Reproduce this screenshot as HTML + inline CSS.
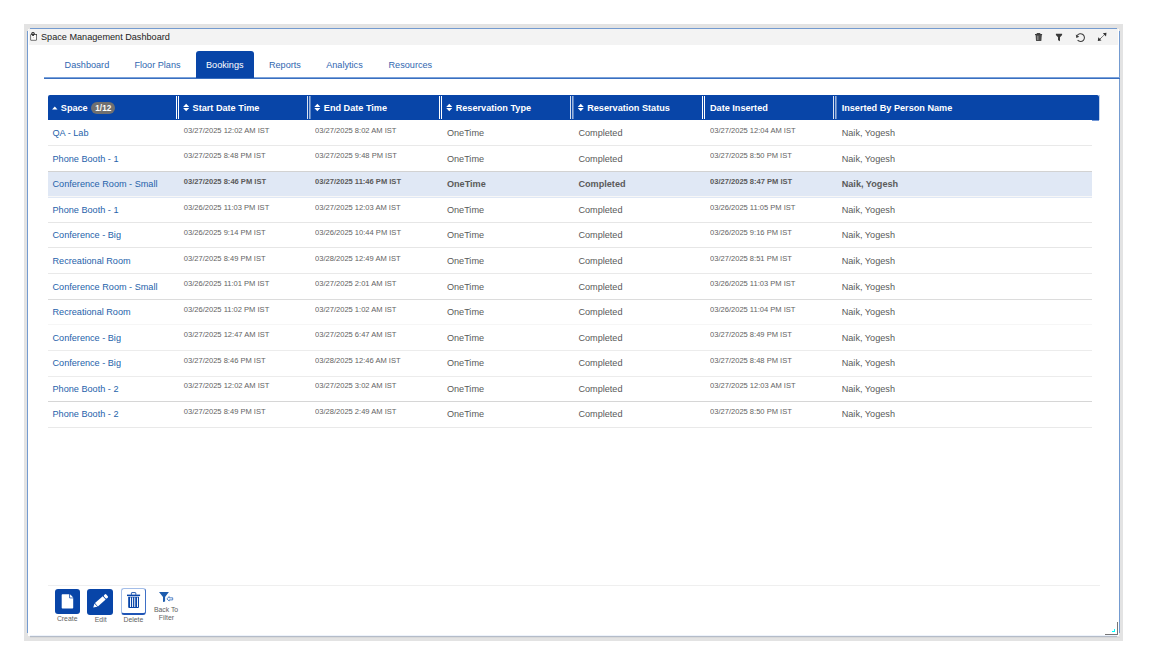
<!DOCTYPE html>
<html><head><meta charset="utf-8"><title>Space Management Dashboard</title>
<style>
html,body{margin:0;padding:0;background:#fff;width:1156px;height:666px;overflow:hidden;}
body{position:relative;font-family:"Liberation Sans",sans-serif;}
.b{position:absolute;}
.t{position:absolute;white-space:nowrap;transform-origin:0 50%;}
.bold{font-weight:bold;}
.link{color:#2562aa;}
.gray{color:#5a5a5a;}
.dgray{color:#636363;}
</style></head><body>
<div class="b" style="left:24.00px;top:24.00px;width:1099.00px;height:617.00px;background:#e3e3e3"></div>
<div class="b" style="left:28.00px;top:29.00px;width:1091.00px;height:607.00px;background:#fff"></div>
<div class="b" style="left:27.60px;top:28.60px;width:2.00px;height:2.00px;background:#f4f0ee;border-radius:2px 0 0 0"></div>
<div class="b" style="left:30.00px;top:28.00px;width:1087.00px;height:1.00px;background:#749bd0"></div>
<div class="b" style="left:27.00px;top:31.00px;width:1.00px;height:602.00px;background:#749bd0"></div>
<div class="b" style="left:1119.00px;top:31.00px;width:1.00px;height:602.00px;background:#749bd0"></div>
<div class="b" style="left:30.00px;top:635.00px;width:1087.00px;height:1.00px;background:#eef3fb"></div>
<div class="b" style="left:30.00px;top:636.00px;width:1087.00px;height:1.00px;background:#b4bcc9"></div>
<div class="b" style="left:30.00px;top:637.00px;width:1090.00px;height:1.00px;background:#d9d9d9"></div>
<div class="b" style="left:29.00px;top:29.00px;width:1089.00px;height:15.50px;background:#f3f3f3"></div>
<div class="t " style="left:41.00px;top:32.96px;font-size:9.14px;line-height:9.14px;transform:scaleY(1.06);color:#222">Space Management Dashboard</div>
<div class="b" style="left:44.00px;top:77.00px;width:1076.00px;height:1.00px;background:#7aa2da"></div>
<div class="b" style="left:44.00px;top:78.00px;width:1076.00px;height:1.00px;background:#3a6fc0"></div>
<div class="b" style="left:196.40px;top:51.40px;width:57.60px;height:26.60px;background:#0845a8;border-radius:3px 3px 0 0"></div>
<div class="t " style="left:64.60px;top:60.76px;font-size:9.14px;line-height:9.14px;transform:scaleY(1.06);color:#3067b0">Dashboard</div>
<div class="t " style="left:134.40px;top:60.76px;font-size:9.14px;line-height:9.14px;transform:scaleY(1.06);color:#3067b0">Floor Plans</div>
<div class="t " style="left:206.00px;top:60.76px;font-size:9.14px;line-height:9.14px;transform:scaleY(1.06);color:#fff">Bookings</div>
<div class="t " style="left:268.90px;top:60.76px;font-size:9.14px;line-height:9.14px;transform:scaleY(1.06);color:#3067b0">Reports</div>
<div class="t " style="left:326.20px;top:60.76px;font-size:9.14px;line-height:9.14px;transform:scaleY(1.06);color:#3067b0">Analytics</div>
<div class="t " style="left:388.50px;top:60.76px;font-size:9.14px;line-height:9.14px;transform:scaleY(1.06);color:#3067b0">Resources</div>
<div class="b" style="left:47.60px;top:95.00px;width:1051.40px;height:25.00px;background:#0845a8;border-radius:2px 2px 0 0"></div>
<div class="b" style="left:1092.00px;top:120.00px;width:7.00px;height:1.00px;background:#7297d6"></div>
<div class="b" style="left:1099.00px;top:95.00px;width:1.00px;height:25.00px;background:rgba(8,69,168,0.25)"></div>
<div class="b" style="left:176.00px;top:96.00px;width:1.00px;height:23.00px;background:#fff"></div>
<div class="b" style="left:178.00px;top:96.00px;width:1.00px;height:23.00px;background:#fff"></div>
<div class="b" style="left:307.00px;top:96.00px;width:1.00px;height:23.00px;background:rgba(255,255,255,0.85)"></div>
<div class="b" style="left:309.00px;top:96.00px;width:1.00px;height:23.00px;background:rgba(255,255,255,0.6)"></div>
<div class="b" style="left:310.00px;top:96.00px;width:1.00px;height:23.00px;background:rgba(255,255,255,0.35)"></div>
<div class="b" style="left:439.00px;top:96.00px;width:1.00px;height:23.00px;background:#fff"></div>
<div class="b" style="left:441.00px;top:96.00px;width:1.00px;height:23.00px;background:#fff"></div>
<div class="b" style="left:570.00px;top:96.00px;width:1.00px;height:23.00px;background:rgba(255,255,255,0.85)"></div>
<div class="b" style="left:572.00px;top:96.00px;width:1.00px;height:23.00px;background:rgba(255,255,255,0.6)"></div>
<div class="b" style="left:573.00px;top:96.00px;width:1.00px;height:23.00px;background:rgba(255,255,255,0.35)"></div>
<div class="b" style="left:702.00px;top:96.00px;width:1.00px;height:23.00px;background:#fff"></div>
<div class="b" style="left:704.00px;top:96.00px;width:1.00px;height:23.00px;background:#fff"></div>
<div class="b" style="left:833.00px;top:96.00px;width:1.00px;height:23.00px;background:rgba(255,255,255,0.85)"></div>
<div class="b" style="left:835.00px;top:96.00px;width:1.00px;height:23.00px;background:rgba(255,255,255,0.6)"></div>
<div class="b" style="left:836.00px;top:96.00px;width:1.00px;height:23.00px;background:rgba(255,255,255,0.35)"></div>
<div class="t bold" style="left:60.80px;top:103.96px;font-size:9.14px;line-height:9.14px;transform:scaleY(1.06);color:#fff">Space</div>
<div class="t bold" style="left:192.60px;top:103.96px;font-size:9.14px;line-height:9.14px;transform:scaleY(1.06);color:#fff">Start Date Time</div>
<div class="t bold" style="left:323.80px;top:103.96px;font-size:9.14px;line-height:9.14px;transform:scaleY(1.06);color:#fff">End Date Time</div>
<div class="t bold" style="left:455.70px;top:103.96px;font-size:9.14px;line-height:9.14px;transform:scaleY(1.06);color:#fff">Reservation Type</div>
<div class="t bold" style="left:587.20px;top:103.96px;font-size:9.14px;line-height:9.14px;transform:scaleY(1.06);color:#fff">Reservation Status</div>
<div class="t bold" style="left:710.00px;top:103.96px;font-size:9.14px;line-height:9.14px;transform:scaleY(1.06);color:#fff">Date Inserted</div>
<div class="t bold" style="left:841.70px;top:103.96px;font-size:9.14px;line-height:9.14px;transform:scaleY(1.06);color:#fff">Inserted By Person Name</div>
<div class="b" style="left:47.80px;top:145.00px;width:1044.00px;height:1.00px;background:#e9e9e9"></div>
<div class="t link" style="left:52.50px;top:129.46px;font-size:9.14px;line-height:9.14px;transform:scaleY(1.06);">QA - Lab</div>
<div class="t dgray" style="left:183.80px;top:127.10px;font-size:7.56px;line-height:7.56px;transform:scaleY(1.07);">03/27/2025 12:02 AM IST</div>
<div class="t dgray" style="left:315.00px;top:127.10px;font-size:7.56px;line-height:7.56px;transform:scaleY(1.07);">03/27/2025 8:02 AM IST</div>
<div class="t gray" style="left:446.90px;top:129.46px;font-size:9.14px;line-height:9.14px;transform:scaleY(1.06);">OneTime</div>
<div class="t gray" style="left:578.40px;top:129.46px;font-size:9.14px;line-height:9.14px;transform:scaleY(1.06);">Completed</div>
<div class="t dgray" style="left:710.00px;top:127.10px;font-size:7.56px;line-height:7.56px;transform:scaleY(1.07);">03/27/2025 12:04 AM IST</div>
<div class="t gray" style="left:841.70px;top:129.46px;font-size:9.14px;line-height:9.14px;transform:scaleY(1.06);">Naik, Yogesh</div>
<div class="t link" style="left:52.50px;top:154.78px;font-size:9.14px;line-height:9.14px;transform:scaleY(1.06);">Phone Booth - 1</div>
<div class="t dgray" style="left:183.80px;top:152.42px;font-size:7.56px;line-height:7.56px;transform:scaleY(1.07);">03/27/2025 8:48 PM IST</div>
<div class="t dgray" style="left:315.00px;top:152.42px;font-size:7.56px;line-height:7.56px;transform:scaleY(1.07);">03/27/2025 9:48 PM IST</div>
<div class="t gray" style="left:446.90px;top:154.78px;font-size:9.14px;line-height:9.14px;transform:scaleY(1.06);">OneTime</div>
<div class="t gray" style="left:578.40px;top:154.78px;font-size:9.14px;line-height:9.14px;transform:scaleY(1.06);">Completed</div>
<div class="t dgray" style="left:710.00px;top:152.42px;font-size:7.56px;line-height:7.56px;transform:scaleY(1.07);">03/27/2025 8:50 PM IST</div>
<div class="t gray" style="left:841.70px;top:154.78px;font-size:9.14px;line-height:9.14px;transform:scaleY(1.06);">Naik, Yogesh</div>
<div class="b" style="left:47.80px;top:172.00px;width:1044.00px;height:26.00px;background:#e0e8f5"></div>
<div class="b" style="left:47.80px;top:171.00px;width:1044.00px;height:1.00px;background:#d2d2d2"></div>
<div class="b" style="left:47.80px;top:196.00px;width:1044.00px;height:1.00px;background:#f7f7f7"></div>
<div class="t link" style="left:52.50px;top:180.33px;font-size:9.14px;line-height:9.14px;transform:scaleY(1.06);">Conference Room - Small</div>
<div class="t gray bold" style="left:183.80px;top:177.97px;font-size:7.56px;line-height:7.56px;transform:scaleY(1.07);">03/27/2025 8:46 PM IST</div>
<div class="t gray bold" style="left:315.00px;top:177.97px;font-size:7.56px;line-height:7.56px;transform:scaleY(1.07);">03/27/2025 11:46 PM IST</div>
<div class="t gray bold" style="left:446.90px;top:180.33px;font-size:9.14px;line-height:9.14px;transform:scaleY(1.06);">OneTime</div>
<div class="t gray bold" style="left:578.40px;top:180.33px;font-size:9.14px;line-height:9.14px;transform:scaleY(1.06);">Completed</div>
<div class="t gray bold" style="left:710.00px;top:177.97px;font-size:7.56px;line-height:7.56px;transform:scaleY(1.07);">03/27/2025 8:47 PM IST</div>
<div class="t gray bold" style="left:841.70px;top:180.33px;font-size:9.14px;line-height:9.14px;transform:scaleY(1.06);">Naik, Yogesh</div>
<div class="b" style="left:47.80px;top:222.00px;width:1044.00px;height:1.00px;background:#e6e6e6"></div>
<div class="t link" style="left:52.50px;top:205.88px;font-size:9.14px;line-height:9.14px;transform:scaleY(1.06);">Phone Booth - 1</div>
<div class="t dgray" style="left:183.80px;top:203.52px;font-size:7.56px;line-height:7.56px;transform:scaleY(1.07);">03/26/2025 11:03 PM IST</div>
<div class="t dgray" style="left:315.00px;top:203.52px;font-size:7.56px;line-height:7.56px;transform:scaleY(1.07);">03/27/2025 12:03 AM IST</div>
<div class="t gray" style="left:446.90px;top:205.88px;font-size:9.14px;line-height:9.14px;transform:scaleY(1.06);">OneTime</div>
<div class="t gray" style="left:578.40px;top:205.88px;font-size:9.14px;line-height:9.14px;transform:scaleY(1.06);">Completed</div>
<div class="t dgray" style="left:710.00px;top:203.52px;font-size:7.56px;line-height:7.56px;transform:scaleY(1.07);">03/26/2025 11:05 PM IST</div>
<div class="t gray" style="left:841.70px;top:205.88px;font-size:9.14px;line-height:9.14px;transform:scaleY(1.06);">Naik, Yogesh</div>
<div class="b" style="left:47.80px;top:247.00px;width:1044.00px;height:1.00px;background:#e6e6e6"></div>
<div class="t link" style="left:52.50px;top:231.43px;font-size:9.14px;line-height:9.14px;transform:scaleY(1.06);">Conference - Big</div>
<div class="t dgray" style="left:183.80px;top:229.07px;font-size:7.56px;line-height:7.56px;transform:scaleY(1.07);">03/26/2025 9:14 PM IST</div>
<div class="t dgray" style="left:315.00px;top:229.07px;font-size:7.56px;line-height:7.56px;transform:scaleY(1.07);">03/26/2025 10:44 PM IST</div>
<div class="t gray" style="left:446.90px;top:231.43px;font-size:9.14px;line-height:9.14px;transform:scaleY(1.06);">OneTime</div>
<div class="t gray" style="left:578.40px;top:231.43px;font-size:9.14px;line-height:9.14px;transform:scaleY(1.06);">Completed</div>
<div class="t dgray" style="left:710.00px;top:229.07px;font-size:7.56px;line-height:7.56px;transform:scaleY(1.07);">03/26/2025 9:16 PM IST</div>
<div class="t gray" style="left:841.70px;top:231.43px;font-size:9.14px;line-height:9.14px;transform:scaleY(1.06);">Naik, Yogesh</div>
<div class="b" style="left:47.80px;top:273.00px;width:1044.00px;height:1.00px;background:#e9e9e9"></div>
<div class="t link" style="left:52.50px;top:256.98px;font-size:9.14px;line-height:9.14px;transform:scaleY(1.06);">Recreational Room</div>
<div class="t dgray" style="left:183.80px;top:254.62px;font-size:7.56px;line-height:7.56px;transform:scaleY(1.07);">03/27/2025 8:49 PM IST</div>
<div class="t dgray" style="left:315.00px;top:254.62px;font-size:7.56px;line-height:7.56px;transform:scaleY(1.07);">03/28/2025 12:49 AM IST</div>
<div class="t gray" style="left:446.90px;top:256.98px;font-size:9.14px;line-height:9.14px;transform:scaleY(1.06);">OneTime</div>
<div class="t gray" style="left:578.40px;top:256.98px;font-size:9.14px;line-height:9.14px;transform:scaleY(1.06);">Completed</div>
<div class="t dgray" style="left:710.00px;top:254.62px;font-size:7.56px;line-height:7.56px;transform:scaleY(1.07);">03/27/2025 8:51 PM IST</div>
<div class="t gray" style="left:841.70px;top:256.98px;font-size:9.14px;line-height:9.14px;transform:scaleY(1.06);">Naik, Yogesh</div>
<div class="b" style="left:47.80px;top:299.00px;width:1044.00px;height:1.00px;background:#dcdcdc"></div>
<div class="t link" style="left:52.50px;top:282.53px;font-size:9.14px;line-height:9.14px;transform:scaleY(1.06);">Conference Room - Small</div>
<div class="t dgray" style="left:183.80px;top:280.17px;font-size:7.56px;line-height:7.56px;transform:scaleY(1.07);">03/26/2025 11:01 PM IST</div>
<div class="t dgray" style="left:315.00px;top:280.17px;font-size:7.56px;line-height:7.56px;transform:scaleY(1.07);">03/27/2025 2:01 AM IST</div>
<div class="t gray" style="left:446.90px;top:282.53px;font-size:9.14px;line-height:9.14px;transform:scaleY(1.06);">OneTime</div>
<div class="t gray" style="left:578.40px;top:282.53px;font-size:9.14px;line-height:9.14px;transform:scaleY(1.06);">Completed</div>
<div class="t dgray" style="left:710.00px;top:280.17px;font-size:7.56px;line-height:7.56px;transform:scaleY(1.07);">03/26/2025 11:03 PM IST</div>
<div class="t gray" style="left:841.70px;top:282.53px;font-size:9.14px;line-height:9.14px;transform:scaleY(1.06);">Naik, Yogesh</div>
<div class="b" style="left:47.80px;top:324.00px;width:1044.00px;height:1.00px;background:#f6f6f6"></div>
<div class="t link" style="left:52.50px;top:308.08px;font-size:9.14px;line-height:9.14px;transform:scaleY(1.06);">Recreational Room</div>
<div class="t dgray" style="left:183.80px;top:305.72px;font-size:7.56px;line-height:7.56px;transform:scaleY(1.07);">03/26/2025 11:02 PM IST</div>
<div class="t dgray" style="left:315.00px;top:305.72px;font-size:7.56px;line-height:7.56px;transform:scaleY(1.07);">03/27/2025 1:02 AM IST</div>
<div class="t gray" style="left:446.90px;top:308.08px;font-size:9.14px;line-height:9.14px;transform:scaleY(1.06);">OneTime</div>
<div class="t gray" style="left:578.40px;top:308.08px;font-size:9.14px;line-height:9.14px;transform:scaleY(1.06);">Completed</div>
<div class="t dgray" style="left:710.00px;top:305.72px;font-size:7.56px;line-height:7.56px;transform:scaleY(1.07);">03/26/2025 11:04 PM IST</div>
<div class="t gray" style="left:841.70px;top:308.08px;font-size:9.14px;line-height:9.14px;transform:scaleY(1.06);">Naik, Yogesh</div>
<div class="b" style="left:47.80px;top:350.00px;width:1044.00px;height:1.00px;background:#ececec"></div>
<div class="t link" style="left:52.50px;top:333.63px;font-size:9.14px;line-height:9.14px;transform:scaleY(1.06);">Conference - Big</div>
<div class="t dgray" style="left:183.80px;top:331.27px;font-size:7.56px;line-height:7.56px;transform:scaleY(1.07);">03/27/2025 12:47 AM IST</div>
<div class="t dgray" style="left:315.00px;top:331.27px;font-size:7.56px;line-height:7.56px;transform:scaleY(1.07);">03/27/2025 6:47 AM IST</div>
<div class="t gray" style="left:446.90px;top:333.63px;font-size:9.14px;line-height:9.14px;transform:scaleY(1.06);">OneTime</div>
<div class="t gray" style="left:578.40px;top:333.63px;font-size:9.14px;line-height:9.14px;transform:scaleY(1.06);">Completed</div>
<div class="t dgray" style="left:710.00px;top:331.27px;font-size:7.56px;line-height:7.56px;transform:scaleY(1.07);">03/27/2025 8:49 PM IST</div>
<div class="t gray" style="left:841.70px;top:333.63px;font-size:9.14px;line-height:9.14px;transform:scaleY(1.06);">Naik, Yogesh</div>
<div class="b" style="left:47.80px;top:376.00px;width:1044.00px;height:1.00px;background:#ececec"></div>
<div class="t link" style="left:52.50px;top:359.18px;font-size:9.14px;line-height:9.14px;transform:scaleY(1.06);">Conference - Big</div>
<div class="t dgray" style="left:183.80px;top:356.82px;font-size:7.56px;line-height:7.56px;transform:scaleY(1.07);">03/27/2025 8:46 PM IST</div>
<div class="t dgray" style="left:315.00px;top:356.82px;font-size:7.56px;line-height:7.56px;transform:scaleY(1.07);">03/28/2025 12:46 AM IST</div>
<div class="t gray" style="left:446.90px;top:359.18px;font-size:9.14px;line-height:9.14px;transform:scaleY(1.06);">OneTime</div>
<div class="t gray" style="left:578.40px;top:359.18px;font-size:9.14px;line-height:9.14px;transform:scaleY(1.06);">Completed</div>
<div class="t dgray" style="left:710.00px;top:356.82px;font-size:7.56px;line-height:7.56px;transform:scaleY(1.07);">03/27/2025 8:48 PM IST</div>
<div class="t gray" style="left:841.70px;top:359.18px;font-size:9.14px;line-height:9.14px;transform:scaleY(1.06);">Naik, Yogesh</div>
<div class="b" style="left:47.80px;top:401.00px;width:1044.00px;height:1.00px;background:#d6d6d6"></div>
<div class="t link" style="left:52.50px;top:384.73px;font-size:9.14px;line-height:9.14px;transform:scaleY(1.06);">Phone Booth - 2</div>
<div class="t dgray" style="left:183.80px;top:382.37px;font-size:7.56px;line-height:7.56px;transform:scaleY(1.07);">03/27/2025 12:02 AM IST</div>
<div class="t dgray" style="left:315.00px;top:382.37px;font-size:7.56px;line-height:7.56px;transform:scaleY(1.07);">03/27/2025 3:02 AM IST</div>
<div class="t gray" style="left:446.90px;top:384.73px;font-size:9.14px;line-height:9.14px;transform:scaleY(1.06);">OneTime</div>
<div class="t gray" style="left:578.40px;top:384.73px;font-size:9.14px;line-height:9.14px;transform:scaleY(1.06);">Completed</div>
<div class="t dgray" style="left:710.00px;top:382.37px;font-size:7.56px;line-height:7.56px;transform:scaleY(1.07);">03/27/2025 12:03 AM IST</div>
<div class="t gray" style="left:841.70px;top:384.73px;font-size:9.14px;line-height:9.14px;transform:scaleY(1.06);">Naik, Yogesh</div>
<div class="b" style="left:47.80px;top:427.00px;width:1044.00px;height:1.00px;background:#e9e9e9"></div>
<div class="t link" style="left:52.50px;top:410.28px;font-size:9.14px;line-height:9.14px;transform:scaleY(1.06);">Phone Booth - 2</div>
<div class="t dgray" style="left:183.80px;top:407.92px;font-size:7.56px;line-height:7.56px;transform:scaleY(1.07);">03/27/2025 8:49 PM IST</div>
<div class="t dgray" style="left:315.00px;top:407.92px;font-size:7.56px;line-height:7.56px;transform:scaleY(1.07);">03/28/2025 2:49 AM IST</div>
<div class="t gray" style="left:446.90px;top:410.28px;font-size:9.14px;line-height:9.14px;transform:scaleY(1.06);">OneTime</div>
<div class="t gray" style="left:578.40px;top:410.28px;font-size:9.14px;line-height:9.14px;transform:scaleY(1.06);">Completed</div>
<div class="t dgray" style="left:710.00px;top:407.92px;font-size:7.56px;line-height:7.56px;transform:scaleY(1.07);">03/27/2025 8:50 PM IST</div>
<div class="t gray" style="left:841.70px;top:410.28px;font-size:9.14px;line-height:9.14px;transform:scaleY(1.06);">Naik, Yogesh</div>
<div class="b" style="left:91.20px;top:102.30px;width:24.20px;height:11.70px;background:#707070;border-radius:6px"></div>
<div class="t bold" style="left:95.30px;top:104.96px;font-size:8.2px;line-height:8.2px;transform:scaleY(1.06);color:#fff">1/12</div>
<div class="b" style="left:47.50px;top:585.00px;width:1052.00px;height:1.00px;background:#efefef"></div>
<div class="b" style="left:54.60px;top:588.90px;width:25.20px;height:25.00px;background:#0845a8;border-radius:3px"></div>
<div class="b" style="left:87.30px;top:588.90px;width:25.50px;height:25.80px;background:#0845a8;border-radius:3px"></div>
<div class="b" style="left:120.50px;top:588.20px;width:25.40px;height:26.60px;background:#fff;border:1px solid #a3bde8;border-right-color:#3f70c6;border-bottom:2px solid #1f55b6;border-radius:3px;box-sizing:border-box"></div>
<div class="t " style="left:56.90px;top:615.90px;font-size:6.85px;line-height:6.85px;transform:scaleY(1.06);color:#5e5e5e">Create</div>
<div class="t " style="left:94.80px;top:616.60px;font-size:6.85px;line-height:6.85px;transform:scaleY(1.06);color:#5e5e5e">Edit</div>
<div class="t " style="left:123.50px;top:616.60px;font-size:6.85px;line-height:6.85px;transform:scaleY(1.06);color:#5e5e5e">Delete</div>
<div class="t " style="left:153.90px;top:606.90px;font-size:6.85px;line-height:6.85px;transform:scaleY(1.06);color:#5e5e5e">Back To</div>
<div class="t " style="left:158.80px;top:614.80px;font-size:6.85px;line-height:6.85px;transform:scaleY(1.06);color:#5e5e5e">Filter</div>
<div class="b" style="left:1105.00px;top:633.50px;width:13.00px;height:1.00px;background:#777"></div>
<div class="b" style="left:1117.00px;top:622.00px;width:1.00px;height:12.50px;background:#777"></div>
<div class="b" style="left:1111.50px;top:631.00px;width:3.50px;height:1.20px;background:#0ff"></div>
<div class="b" style="left:1114.00px;top:628.50px;width:1.20px;height:3.50px;background:#0ff"></div>
<svg class="b" style="left:0;top:0" width="1156" height="666" viewBox="0 0 1156 666"><rect x="30.6" y="34.5" width="5.9" height="5.8" rx="0.3" fill="#fbfbfb" stroke="#5a5a5a" stroke-width="0.85"/><path d="M35.2 34.1h1.7v1.6z" fill="#3a3a3a"/><circle cx="33" cy="33.7" r="1.25" fill="none" stroke="#222" stroke-width="1.1"/><path d="M32.3 34.8h1.6v1.1h-1.6z" fill="#333"/><circle cx="33.5" cy="37.6" r="0.45" fill="#a87"/><path d="M1035 34h7.1v1.1H1035z" fill="#3e3e3e"/><path d="M1036.7 33h3.6v1h-3.6z" fill="#444"/><path d="M1035.6 35.1h6.2l-0.4 5.4q-0.1 0.5-0.6 0.5h-4.2q-0.5 0-0.6-0.5z" fill="#4a4a4a"/><path d="M1037.1 35.8h1.4v4.2h-1.4z" fill="#8a8a8a"/><path d="M1055.9 33.7h6.2v1.3l-2.1 2.3v3.9l-1.2-0.8-0.8-0.2v-2.9l-2.1-2.3z" fill="#3a3a3a"/><path d="M1077.2 35.6A3.9 3.9 0 1 1 1077.6 40.2" fill="none" stroke="#3c3c3c" stroke-width="1.05"/><path d="M1075.8 34.4l0.5 3.6 3-1.3z" fill="#3c3c3c"/><path d="M1099 40.0L1105.3 33.8" stroke="#444" stroke-width="1" stroke-dasharray="1.1 0.5"/><path d="M1106.5 32.8l-0.5 3.7-3.2-3.2z M1097.8 41l0.5-3.7 3.2 3.2z" fill="#333"/><path d="M52.1 109.6L54.8 106.6l2.7 3z" fill="#fff"/><path d="M183.10 107.1L186.15 103.8L189.20 107.1z M183.10 108.0L186.15 111.2L189.20 108.0z" fill="#fff"/><path d="M314.30 107.1L317.35 103.8L320.40 107.1z M314.30 108.0L317.35 111.2L320.40 108.0z" fill="#fff"/><path d="M446.20 107.1L449.25 103.8L452.30 107.1z M446.20 108.0L449.25 111.2L452.30 108.0z" fill="#fff"/><path d="M577.70 107.1L580.75 103.8L583.80 107.1z M577.70 108.0L580.75 111.2L583.80 108.0z" fill="#fff"/><path d="M62.4 594.3H69.8L73.2 597.7V607.8Q73.2 608.5 72.5 608.5H62.4Q61.7 608.5 61.7 607.8V595Q61.7 594.3 62.4 594.3z" fill="#fff"/><path d="M69.6 594.0V597.9H73.5" fill="none" stroke="#0845a8" stroke-width="0.8"/><path d="M70.3 594.6L72.9 597.2H70.3z" fill="#fff"/><g transform="translate(93.2 607.6) rotate(-41.5)"><path d="M0 0L3.6 -2.2V2.2z" fill="#fff"/><rect x="4.3" y="-2.2" width="10.4" height="4.4" fill="#fff"/><rect x="15.5" y="-2.2" width="3.0" height="4.4" rx="1.1" fill="#fff"/></g><path d="M131.4 594.8V593.1Q131.4 592.6 131.9 592.6H135.3Q135.8 592.6 135.8 593.1V594.8" fill="none" stroke="#0845a8" stroke-width="0.9"/><path d="M127 594.6h13.1v1.5H127z" fill="#0845a8"/><path d="M128.2 596.7h10.8v10.3q0 0.9-0.9 0.9h-9q-0.9 0-0.9-0.9z" fill="#0845a8"/><rect x="130" y="597.4" width="0.95" height="9.6" fill="#fff"/><rect x="132.1" y="597.4" width="0.95" height="9.6" fill="#fff"/><rect x="134.3" y="597.4" width="0.95" height="9.6" fill="#fff"/><rect x="137" y="597.4" width="0.95" height="9.6" fill="#fff"/><path d="M159 592.1H168.9L165.1 597V601.4L163 602.1V597z" fill="#1d5cae"/><path d="M166.9 598.8L169.2 596.6V597.8H172.7V599.9H169.2V601.1z" fill="#fff" stroke="#3a72c2" stroke-width="0.85" stroke-linejoin="round"/></svg>
</body></html>
